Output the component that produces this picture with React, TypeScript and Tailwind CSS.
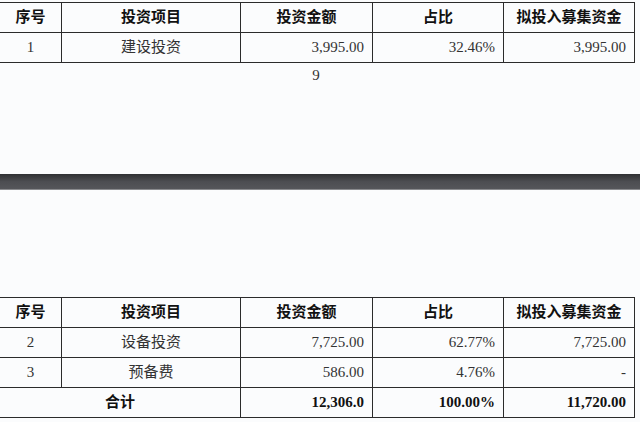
const serif = "font-['Liberation_Serif','Noto_Sans_CJK_SC',serif]";

const cols = ['w-[62px]', 'w-[179px]', 'w-[132px]', 'w-[131px]', 'w-[131px]'];

type Cell = { text: string; align: 'center' | 'right'; span?: number };

function Row({ cells, bold }: { cells: Cell[]; bold?: boolean }) {
  let i = 0;
  return (
    <div className="flex h-[30px]">
      {cells.map((c, k) => {
        const span = c.span ?? 1;
        const width =
          span === 2 ? 'w-[241px]' : cols[i];
        i += span;
        return (
          <div
            key={k}
            className={`${width} shrink-0 flex items-center border-r border-b border-[#2b2b2b] ${
              c.align === 'center' ? 'justify-center' : 'justify-end pr-[8px]'
            } ${bold ? 'font-bold text-[#111]' : 'text-[#333]'} text-[15px]`}
          >
            {c.text}
          </div>
        );
      })}
    </div>
  );
}

const header: Cell[] = [
  { text: '序号', align: 'center' },
  { text: '投资项目', align: 'center' },
  { text: '投资金额', align: 'center' },
  { text: '占比', align: 'center' },
  { text: '拟投入募集资金', align: 'center' },
];

function Table({ rows, total }: { rows: Cell[][]; total?: Cell[] }) {
  return (
    <div className="w-[635px] border-t border-[#2b2b2b]">
      <Row cells={header} bold />
      {rows.map((r, k) => (
        <Row key={k} cells={r} />
      ))}
      {total && <Row cells={total} bold />}
    </div>
  );
}

export default function App() {
  return (
    <div className={`w-[640px] h-[422px] overflow-hidden bg-[#fbfcfd] ${serif}`}>
      <div className="pt-[2px]">
        <Table
          rows={[
            [
              { text: '1', align: 'center' },
              { text: '建设投资', align: 'center' },
              { text: '3,995.00', align: 'right' },
              { text: '32.46%', align: 'right' },
              { text: '3,995.00', align: 'right' },
            ],
          ]}
        />
      </div>

      {/* page number */}
      <div className="h-[111px] flex justify-center pt-[2px] pr-[8px]">
        <span className="text-[15px] leading-[20px] text-[#333]">9</span>
      </div>

      {/* page break band */}
      <div className="h-[16px] bg-gradient-to-b from-[#2f3033] via-[#4c4d51] to-[#55565a] border-b border-[#8a8b8e]" />

      <div className="h-[107px]" />

      <Table
        rows={[
          [
            { text: '2', align: 'center' },
            { text: '设备投资', align: 'center' },
            { text: '7,725.00', align: 'right' },
            { text: '62.77%', align: 'right' },
            { text: '7,725.00', align: 'right' },
          ],
          [
            { text: '3', align: 'center' },
            { text: '预备费', align: 'center' },
            { text: '586.00', align: 'right' },
            { text: '4.76%', align: 'right' },
            { text: '-', align: 'right' },
          ],
        ]}
        total={[
          { text: '合计', align: 'center', span: 2 },
          { text: '12,306.0', align: 'right' },
          { text: '100.00%', align: 'right' },
          { text: '11,720.00', align: 'right' },
        ]}
      />
    </div>
  );
}
